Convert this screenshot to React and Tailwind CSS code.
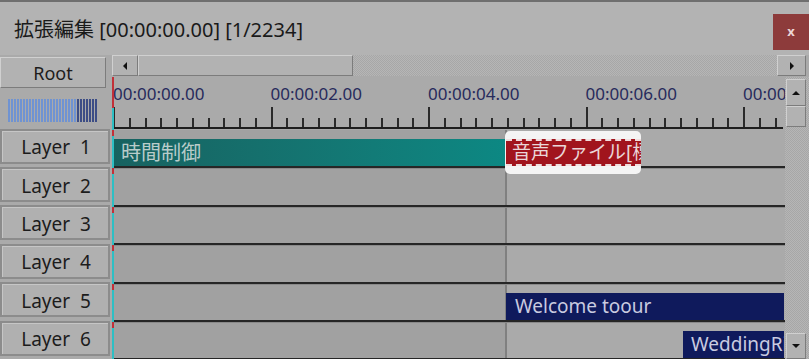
import React from 'react';

const SEC = 78.75;
const TICKS = Array.from({ length: 43 }, (_, i) => i);
const LABELS = ['00:00:00.00', '00:00:02.00', '00:00:04.00', '00:00:06.00', '00:00:08.00'];
const LAYERS = [1, 2, 3, 4, 5, 6];
const ROW_H = 38.4;

const bevel =
  'bg-[#b2b2b2] border border-t-[#d0d0d0] border-l-[#d0d0d0] border-b-[#7c7c7c] border-r-[#7c7c7c]';

const dither =
  'bg-[image:repeating-conic-gradient(#b6b6b6_0_25%,#a7a7a7_0_50%)] bg-[length:2px_2px]';

function Arrow({ dir }) {
  const pts = {
    left: '5,1 5,9 1,5',
    right: '1,1 1,9 5,5',
    up: '1,5 9,5 5,1',
    down: '1,1 9,1 5,5',
  }[dir];
  const vertical = dir === 'up' || dir === 'down';
  return (
    <svg width={vertical ? 10 : 6} height={vertical ? 6 : 10} viewBox={vertical ? '0 0 10 6' : '0 0 6 10'}>
      <polygon points={pts} fill="#111" />
    </svg>
  );
}

function Clip({ row, left, width, className, children }) {
  return (
    <div
      className={`absolute h-[27px] flex items-center overflow-hidden whitespace-nowrap ${className}`}
      style={{ top: row * ROW_H + 9, left, width }}
    >
      {children}
    </div>
  );
}

export default function App() {
  return (
    <div className="w-[809px] h-[359px] overflow-hidden flex flex-col bg-[#aaaaaa] font-['Noto_Sans','Noto_Sans_CJK_JP',sans-serif] text-[#1c1c1c]">
      {/* title bar */}
      <div className="h-[55px] shrink-0 border-t-2 border-[#6f6f6f] bg-[#b3b3b3] flex items-center justify-between">
        <div className="pl-[14px] text-[20px] leading-none text-[#1a1a1a] mt-[3px]">
          拡張編集 [00:00:00.00] [1/2234]
        </div>
        <div className="w-[36px] h-[36px] bg-[#8d3b3b] flex items-center justify-center text-[13px] font-bold text-[#ecd6d6] mt-[7px]">
          x
        </div>
      </div>

      <div className="flex-1 flex min-h-0">
        {/* left column */}
        <div className="w-[112px] shrink-0 flex flex-col">
          <div className={`mt-[2px] h-[32px] w-[106px] ${bevel} border-[#8a8a8a] flex items-center justify-center text-[18px] leading-none`}>
            Root
          </div>
          <div className="h-[41px] pt-[11px] pl-[8px]">
            <div className="flex gap-[1px] h-[23px]">
              {Array.from({ length: 30 }, (_, i) => (
                <div key={i} className={`w-[2px] h-full ${i < 23 ? 'bg-[#6f93d2]' : 'bg-[#3c4d86]'}`} />
              ))}
            </div>
          </div>
          {LAYERS.map((n) => (
            <div key={n} className="h-[38.4px] shrink-0">
              <div className="h-[35px] w-[110px] bg-[#b0b0b0] border-2 border-[#8c8c8c] shadow-[inset_1px_1px_0_#c6c6c6] flex items-center justify-center pt-[3px] pl-[2px] text-[19px] leading-none whitespace-pre">
                {`Layer  ${n}`}
              </div>
            </div>
          ))}
        </div>

        {/* right area */}
        <div className="flex-1 flex flex-col min-w-0">
          {/* horizontal scrollbar */}
          <div className="h-[22px] shrink-0 flex items-start">
            <div className={`w-[26px] h-[21px] ${bevel} flex items-center justify-center`}>
              <Arrow dir="left" />
            </div>
            <div className={`w-[215px] h-[21px] ${bevel}`} />
            <div className={`flex-1 h-[21px] ${dither}`} />
            <div className={`w-[29px] h-[21px] ${bevel} flex items-center justify-center`}>
              <Arrow dir="right" />
            </div>
            <div className="w-[3px]" />
          </div>

          <div className="flex-1 flex min-h-0">
            {/* canvas */}
            <div className="flex-1 flex flex-col min-w-0 relative overflow-hidden">
              {/* ruler */}
              <div className="h-[53px] shrink-0 relative">
                {LABELS.map((t, i) => (
                  <div
                    key={t}
                    className="absolute top-[6px] text-[17px] leading-[22px] text-[#272a5c] whitespace-nowrap"
                    style={{ left: 1 + i * 2 * SEC }}
                  >
                    {t}
                  </div>
                ))}
                {TICKS.map((i) => (
                  <div
                    key={i}
                    className={`absolute bottom-[2px] w-[2px] bg-[#2a2a2a] ${i % 10 === 0 ? 'h-[21px]' : 'h-[10px]'}`}
                    style={{ left: 1 + i * (SEC / 5) }}
                  />
                ))}
                <div className="absolute left-0 right-[2px] bottom-[1px] h-[2px] bg-[#1e1e1e]" />
              </div>

              {/* tracks */}
              <div className="flex-1 relative">
                <div className="absolute left-0 top-0 bottom-0 w-[395px] bg-[#a1a1a1] border-r-2 border-[#808080]" />
                <div className="absolute inset-0 flex flex-col bg-transparent">
                  {LAYERS.map((n) => (
                    <div key={n} className="h-[38.4px] shrink-0 border-b-2 border-[#262626] shadow-[0_1px_0_#8a8a8a] relative" />
                  ))}
                </div>

                <Clip row={0} left={1} width={392} className="bg-linear-to-r from-[#176260] to-[#0c8883] pl-[8px] text-[20px] text-[#b9ccca] leading-none">
                  時間制御
                </Clip>

                <div className="absolute left-[393px] top-[1px] w-[136px] h-[43px] bg-[#f4f4f4] rounded-[5px]" />
                <Clip row={0} left={394} width={135} className="bg-[#a1141d] border-y-2 border-dashed border-[#f0dede] pl-[6px] text-[19px] text-[#ead6d8] leading-none">
                  音声ファイル[標準再生]
                </Clip>

                <Clip row={4} left={394} width={278} className="bg-[#0f1a5c] pl-[9px] text-[19px] text-[#c9cbe0] leading-none">
                  Welcome toour
                </Clip>
                <Clip row={5} left={571} width={101} className="bg-[#0f1a5c] pl-[8px] text-[19px] text-[#c9cbe0] leading-none">
                  WeddingRing
                </Clip>
              </div>

              {/* playhead */}
              <div className="absolute left-0 top-0 w-[2px] h-[31px] bg-[#c23038]" />
              <div className="absolute left-0 top-[31px] bottom-0 w-[2px] bg-[#2dbfc4]" />
              {LAYERS.map((n) => (
                <div
                  key={n}
                  className="absolute left-0 w-[2px] h-[6px] bg-[#c23038]"
                  style={{ top: 53 + (n - 1) * ROW_H }}
                />
              ))}
            </div>

            {/* vertical scrollbar */}
            <div className={`w-[24px] shrink-0 flex flex-col pt-[2px] pl-[1px] pr-[3px] ${dither}`}>
              <div className={`h-[27px] ${bevel} flex items-center justify-center`}>
                <Arrow dir="up" />
              </div>
              <div className={`h-[21px] ${bevel}`} />
              <div className="flex-1" />
              <div className={`h-[26px] ${bevel} flex items-center justify-center`}>
                <Arrow dir="down" />
              </div>
            </div>
          </div>
        </div>
      </div>
    </div>
  );
}
